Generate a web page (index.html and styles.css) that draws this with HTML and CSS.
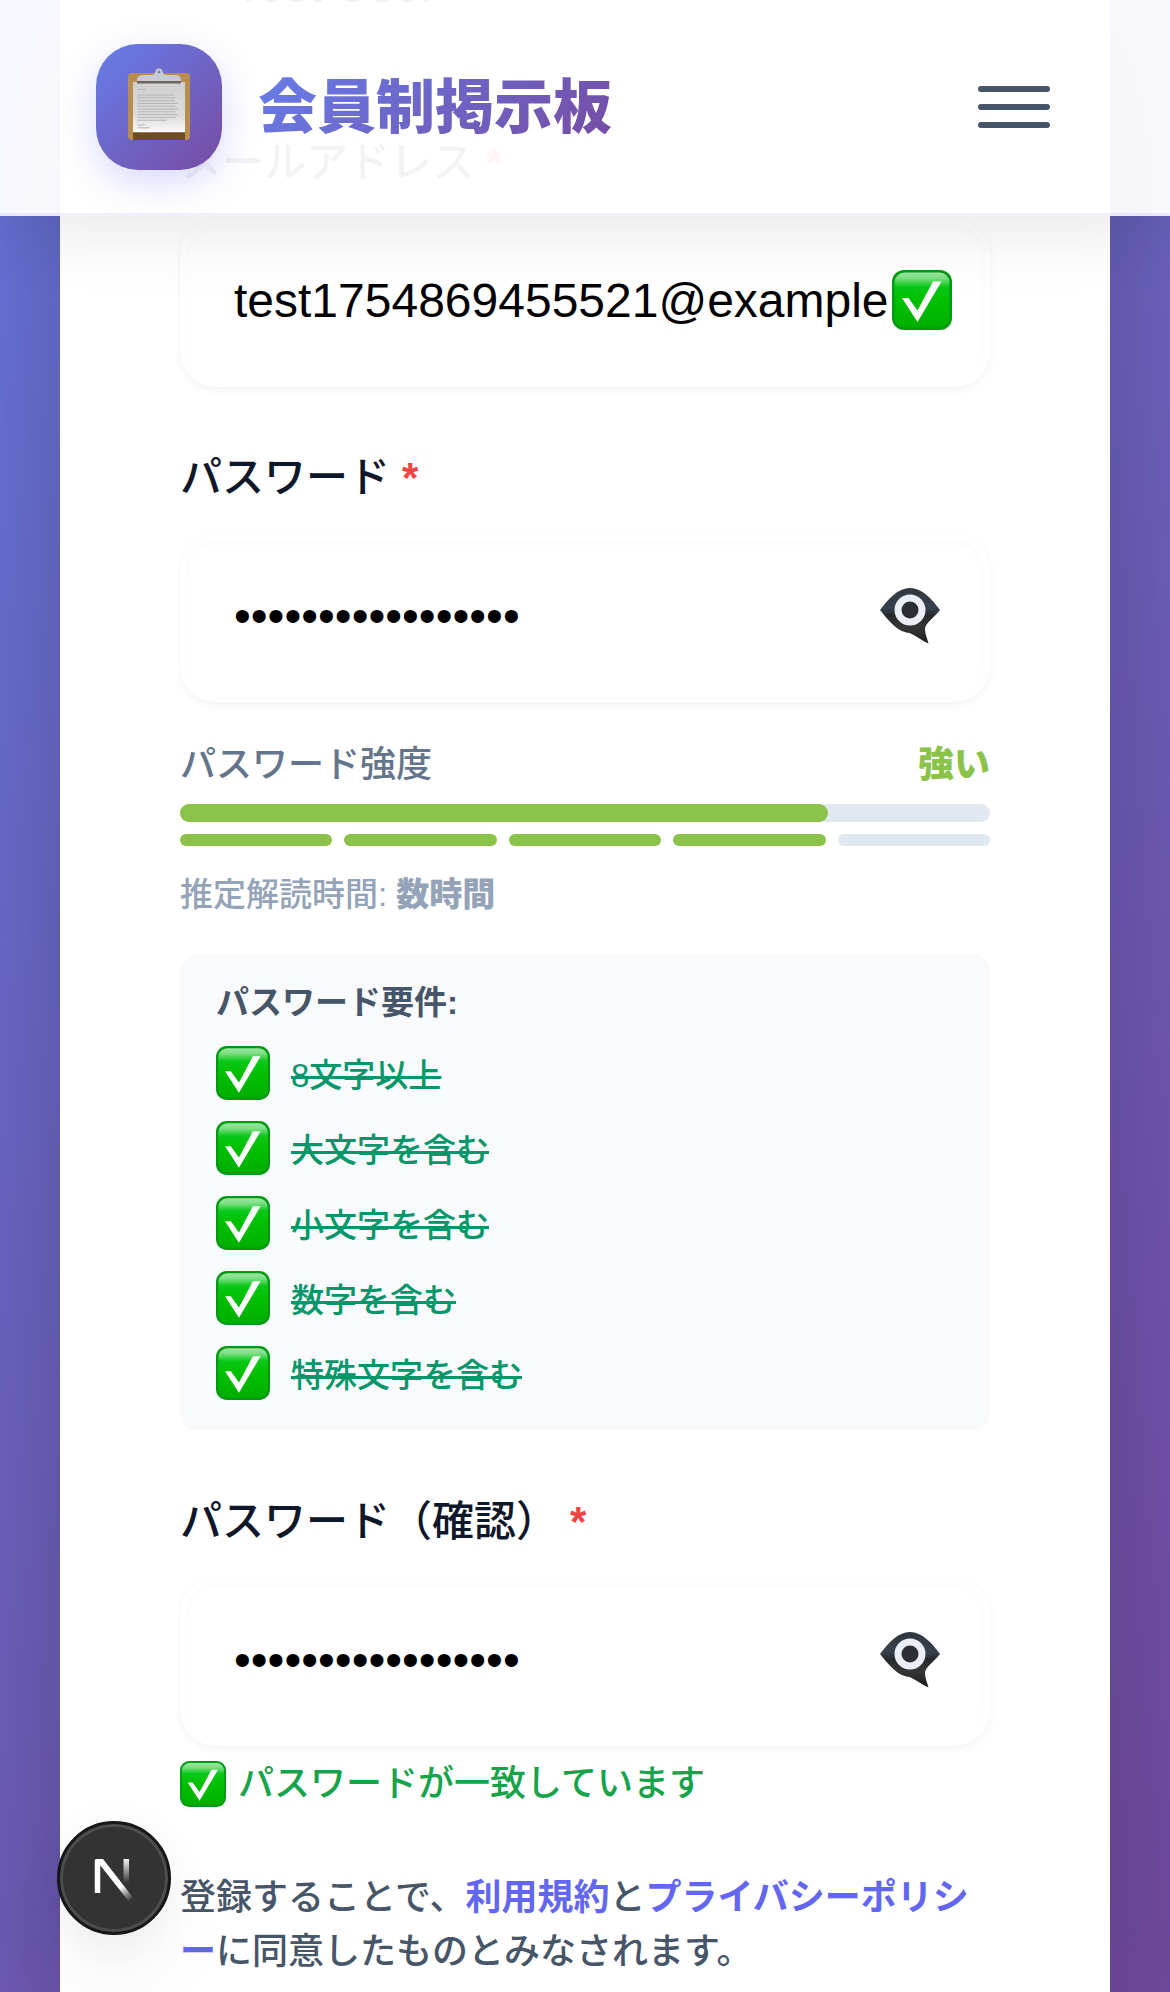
FILE: index.html
```html
<!DOCTYPE html>
<html lang="ja">
<head>
<meta charset="utf-8">
<meta name="viewport" content="width=device-width, initial-scale=1">
<title>会員制掲示板</title>
<link rel="stylesheet" href="styles.css">
</head>
<body>
<svg class="defs" aria-hidden="true">
  <defs>
    <linearGradient id="tick-face" x1="0" y1="0" x2="0" y2="1">
      <stop offset="0" stop-color="#9be7a0"/>
      <stop offset=".1" stop-color="#7fe086"/>
      <stop offset=".26" stop-color="#08c818"/>
      <stop offset=".5" stop-color="#00c000"/>
      <stop offset="1" stop-color="#00ae00"/>
    </linearGradient>
    <linearGradient id="eye-body" x1="0" y1="0" x2="0" y2="1">
      <stop offset="0" stop-color="#30363d"/>
      <stop offset=".35" stop-color="#37424d"/>
      <stop offset=".5" stop-color="#26292c"/>
      <stop offset=".7" stop-color="#363636"/>
      <stop offset="1" stop-color="#1c1c1c"/>
    </linearGradient>
    <linearGradient id="paper" x1="0" y1="0" x2="0" y2="1">
      <stop offset="0" stop-color="#cfcfcf"/>
      <stop offset=".7" stop-color="#dedede"/>
      <stop offset="1" stop-color="#fafafa"/>
    </linearGradient>
    <linearGradient id="n-diagonal" gradientUnits="userSpaceOnUse" x1="28" y1="28" x2="38" y2="42">
      <stop offset="0" stop-color="#fff"/>
      <stop offset="1" stop-color="#fff" stop-opacity="0"/>
    </linearGradient>
    <linearGradient id="n-stem" gradientUnits="userSpaceOnUse" x1="0" y1="0" x2="0" y2="25">
      <stop offset="0" stop-color="#fff"/>
      <stop offset="1" stop-color="#fff" stop-opacity="0"/>
    </linearGradient>
    <symbol id="tick" viewBox="0 0 60 60">
      <rect width="60" height="60" rx="12" fill="#009b12"/>
      <rect x="2.500" y="2.500" width="55" height="55" rx="10" fill="url(#tick-face)"/>
      <path d="M10 28h6.500L25.500 40.500 41 11.500h8.500L25.500 52z" fill="#fff"/>
    </symbol>
    <symbol id="eye" viewBox="0 0 60 56">
      <path d="M0 22C8 11 18 0 30 0s22 11 30 22c-5 7-15 13-15 19 0 5 2 9 3.500 14.500-7-3-13-8-19-10.500C18 44.500 9 33 0 22z" fill="url(#eye-body)"/>
      <circle cx="30" cy="22" r="15.500" fill="#eceef7"/>
      <circle cx="30" cy="22" r="8.500" fill="#2b2f33"/>
    </symbol>
  </defs>
</svg>

<header class="header">
  <a class="brand" href="#">
    <span class="brand-mark">
      <svg class="clipboard" viewBox="0 0 62 72" aria-hidden="true">
        <rect y="5" width="62" height="67" rx="4" fill="#b98d4f"/>
        <path d="M5 60h52v12H5z" fill="#6f4d24"/>
        <path d="M5 14h52v50H5z" fill="url(#paper)"/>
        <path d="M5 63.500h52" stroke="#fff" stroke-width="1.500"/>
        <path d="M9 12h44v3.500H9z" fill="#6d655c"/>
        <path d="M9 13c0-5 2-6 8-6h6c3 0 4-2 5-4a3.500 3.500 0 0 1 6 0c1 2 2 4 5 4h6c6 0 8 1 8 6z" fill="#c5cbd0"/>
        <circle cx="31" cy="4" r="2.500" fill="#7a7fae" stroke="#c9ced3" stroke-width="2"/>
        <path d="M9.500 21.500h8M9.500 27h36M9.500 29.800h38M9.500 32.600h37M9.500 35.400h40M9.500 38.200h38M9.500 41h41M9.500 43.800h38M9.500 46.600h40M9.500 49.400h38M9.500 52.200h29M9.500 57h7M9.500 59.800h12" stroke="#b4b4b4" stroke-width="1"/>
      </svg>
    </span>
    <span class="brand-name">会員制掲示板</span>
  </a>
  <button class="menu-button" type="button" aria-label="メニュー">
    <span class="menu-line"></span>
    <span class="menu-line"></span>
    <span class="menu-line"></span>
  </button>
</header>

<main class="card">
  <form class="form">
    <div class="field">
      <div class="input-wrap">
        <input class="input" type="text" value="Test User" aria-label="名前">
      </div>
    </div>

    <div class="field">
      <label class="label" for="email">メールアドレス<span class="required">*</span></label>
      <div class="input-wrap">
        <input class="input" id="email" type="email" value="test1754869455521@example">
        <svg class="input-tick" aria-hidden="true"><use href="#tick"/></svg>
      </div>
    </div>

    <div class="field">
      <label class="label" for="password">パスワード<span class="required">*</span></label>
      <div class="input-wrap">
        <input class="input" id="password" type="password" value="TestPassword1234!">
        <button class="reveal" type="button" aria-label="パスワードを表示"><svg class="eye" aria-hidden="true"><use href="#eye"/></svg></button>
      </div>
      <div class="strength">
        <div class="strength-head">
          <span>パスワード強度</span>
          <strong class="strength-level">強い</strong>
        </div>
        <div class="meter"><div class="meter-fill" style="width: 80%"></div></div>
        <div class="segments">
          <span class="segment segment-on"></span>
          <span class="segment segment-on"></span>
          <span class="segment segment-on"></span>
          <span class="segment segment-on"></span>
          <span class="segment"></span>
        </div>
        <p class="crack-time">推定解読時間: <strong>数時間</strong></p>
      </div>
      <div class="rules">
        <p class="rules-title">パスワード要件:</p>
        <ul class="rules-list">
          <li class="rule"><svg class="rule-tick" aria-hidden="true"><use href="#tick"/></svg><span class="rule-text">8文字以上</span></li>
          <li class="rule"><svg class="rule-tick" aria-hidden="true"><use href="#tick"/></svg><span class="rule-text">大文字を含む</span></li>
          <li class="rule"><svg class="rule-tick" aria-hidden="true"><use href="#tick"/></svg><span class="rule-text">小文字を含む</span></li>
          <li class="rule"><svg class="rule-tick" aria-hidden="true"><use href="#tick"/></svg><span class="rule-text">数字を含む</span></li>
          <li class="rule"><svg class="rule-tick" aria-hidden="true"><use href="#tick"/></svg><span class="rule-text">特殊文字を含む</span></li>
        </ul>
      </div>
    </div>

    <div class="field">
      <label class="label" for="confirm">パスワード（確認）<span class="required">*</span></label>
      <div class="input-wrap">
        <input class="input" id="confirm" type="password" value="TestPassword1234!">
        <button class="reveal" type="button" aria-label="パスワードを表示"><svg class="eye" aria-hidden="true"><use href="#eye"/></svg></button>
      </div>
      <p class="match"><svg class="match-tick" aria-hidden="true"><use href="#tick"/></svg>パスワードが一致しています</p>
    </div>

    <p class="terms">登録することで、<a href="#">利用規約</a>と<a href="#">プライバシーポリシー</a>に同意したものとみなされます。</p>
  </form>
</main>

<button class="dev-badge" type="button" aria-label="Next.js">
  <svg class="dev-logo" viewBox="0 0 40 44" aria-hidden="true">
    <path d="M3.500 35V2" stroke="#fff" stroke-width="5.500" fill="none"/>
    <path d="M1 1h8L39 39.500 34.500 43 6 7z" fill="url(#n-diagonal)"/>
    <path d="M29.500 1h5.500v24h-5.500z" fill="url(#n-stem)"/>
  </svg>
</button>
</body>
</html>
```

FILE: styles.css
```css
* {
  box-sizing: border-box;
}

body {
  display: flex;
  flex-direction: column;
  margin: 0;
  min-height: 100vh;
  overflow-x: hidden;
  background: linear-gradient(135deg, #6879e0 0%, #764ba2 100%);
  font-family: "Liberation Sans", "Noto Sans CJK JP", sans-serif;
  font-weight: 500;
  color: #0f172a;
}

p,
ul {
  margin: 0;
  padding: 0;
}

.defs {
  position: absolute;
  width: 0;
  height: 0;
}

/* Header */
.header {
  position: fixed;
  top: 0;
  left: 0;
  right: 0;
  z-index: 10;
  display: flex;
  align-items: center;
  justify-content: space-between;
  height: 216px;
  padding: 0 96px;
  background: rgba(255, 255, 255, 0.95);
  border-bottom: 3px solid rgba(99, 102, 241, 0.1);
  box-shadow: 0 12px 72px rgba(0, 0, 0, 0.1);
}

.brand {
  display: flex;
  align-items: center;
  gap: 36px;
  text-decoration: none;
}

.brand-mark {
  display: flex;
  align-items: center;
  justify-content: center;
  width: 126px;
  height: 126px;
  border-radius: 42px;
  background: linear-gradient(135deg, #667eea 0%, #764ba2 100%);
  box-shadow: 0 12px 36px rgba(99, 102, 241, 0.25);
}

.clipboard {
  width: 62px;
  height: 72px;
  margin-bottom: 6px;
}

.brand-name {
  padding-top: 3px;
  font-size: 59px;
  line-height: 90px;
  font-weight: 900;
  background: linear-gradient(135deg, #667eea 0%, #764ba2 100%);
  background-clip: text;
  -webkit-background-clip: text;
  color: transparent;
}

.menu-button {
  display: flex;
  flex-direction: column;
  gap: 12px;
  padding: 24px;
  border: 0;
  background: none;
}

.menu-line {
  width: 72px;
  height: 6px;
  border-radius: 3px;
  background: #475569;
}

/* Registration card, scrolled so that the name field is behind the header */
.card {
  flex: 1;
  margin: -96px 60px 0;
  padding: 0 120px;
  background: #fff;
  box-shadow: 0 75px 150px rgba(0, 0, 0, 0.25);
}

.form {
  display: flex;
  flex-direction: column;
  gap: 60px;
}

.label {
  display: block;
  margin-bottom: 25px;
  font-size: 42px;
  line-height: 62px;
  font-weight: 500;
}

.required {
  margin-left: 12px;
  font-weight: 700;
  color: #ef4444;
}

.input-wrap {
  position: relative;
}

.input {
  display: block;
  width: 100%;
  height: 168px;
  padding: 0 90px 6px 48px;
  border: 6px solid rgba(255, 255, 255, 0.2);
  border-radius: 36px;
  background: #fff;
  box-shadow: 0 3px 9px rgba(0, 0, 0, 0.05), inset 0 3px 9px rgba(0, 0, 0, 0.02);
  font-family: "Liberation Sans", Arial, sans-serif;
  font-size: 48px;
  color: #000;
}

.input-tick {
  position: absolute;
  top: 51px;
  right: 38px;
  width: 60px;
  height: 60px;
}

.reveal {
  position: absolute;
  top: 54px;
  right: 50px;
  padding: 0;
  border: 0;
  background: none;
}

.eye {
  display: block;
  width: 60px;
  height: 56px;
}

/* Password strength */
.strength {
  margin-top: 36px;
}

.strength-head {
  display: flex;
  justify-content: space-between;
  margin-bottom: 12px;
  font-size: 36px;
  line-height: 54px;
  color: #64748b;
}

.strength-level {
  font-weight: 900;
  color: #8bc34a;
}

.meter {
  height: 18px;
  border-radius: 9px;
  background: #e2e8f0;
}

.meter-fill {
  height: 100%;
  border-radius: 9px;
  background: #8bc34a;
}

.segments {
  display: grid;
  grid-template-columns: repeat(5, 1fr);
  gap: 12px;
  margin-top: 12px;
}

.segment {
  height: 12px;
  border-radius: 6px;
  background: #e2e8f0;
}

.segment-on {
  background: #8bc34a;
}

.crack-time {
  margin-top: 24px;
  font-size: 33px;
  line-height: 50px;
  color: #94a3b8;
}

.crack-time strong {
  font-weight: 900;
}

.rules {
  margin-top: 34px;
  padding: 24px 36px 28px;
  border-radius: 18px;
  background: #f8fafc;
}

.rules-title {
  margin-bottom: 15px;
  font-size: 33px;
  line-height: 50px;
  font-weight: 700;
  color: #475569;
}

.rules-list {
  display: flex;
  flex-direction: column;
  gap: 15px;
  list-style: none;
}

.rule {
  display: flex;
  align-items: center;
  gap: 21px;
  height: 60px;
}

.rule-tick {
  width: 54px;
  height: 54px;
}

.rule-text {
  padding-top: 6px;
  font-size: 33px;
  line-height: 50px;
  color: #059669;
  text-decoration: line-through;
  text-decoration-thickness: 3px;
}

.match {
  display: flex;
  align-items: center;
  gap: 12px;
  margin-top: 11px;
  font-size: 36px;
  line-height: 54px;
  color: #16a34a;
}

.match-tick {
  width: 46px;
  height: 46px;
}

.terms {
  font-size: 36px;
  line-height: 54px;
  line-break: loose;
  color: #475569;
}

.terms a {
  color: #6366f1;
  font-weight: 700;
  text-decoration: none;
}

/* Floating development badge */
.dev-badge {
  position: fixed;
  left: 57px;
  bottom: 57px;
  z-index: 20;
  display: flex;
  align-items: center;
  justify-content: center;
  width: 114px;
  height: 114px;
  padding: 0;
  border: 3px solid #171717;
  border-radius: 50%;
  background: #333;
  box-shadow: inset 0 0 0 3px #4d4d4d, 0 48px 96px -24px rgba(0, 0, 0, 0.12), 0 12px 48px rgba(0, 0, 0, 0.06);
}

.dev-logo {
  width: 40px;
  height: 44px;
  margin-top: 4px;
}
```
